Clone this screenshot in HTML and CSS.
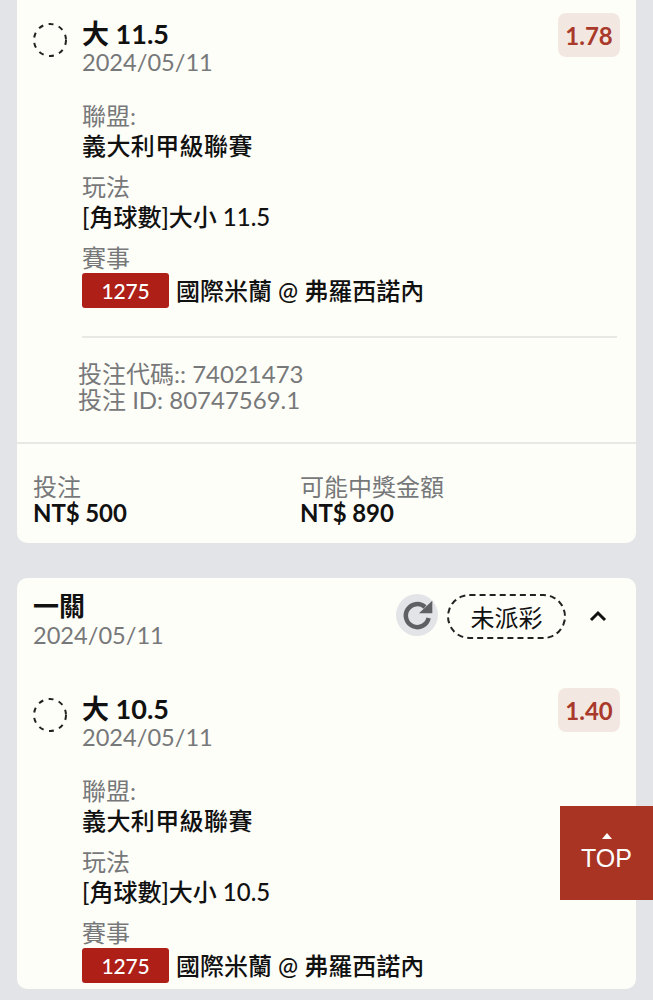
FILE: index.html
```html
<!DOCTYPE html>
<html lang="zh-Hant">
<head>
<meta charset="utf-8">
<title>投注紀錄</title>
<link rel="stylesheet" href="styles.css">
</head>
<body>
<main class="page">
  <section class="card card-first">
    <div class="bet">
      <svg class="status-dot" viewBox="0 0 34 34" width="34" height="34"><circle cx="17" cy="17" r="16" fill="none" stroke="#222" stroke-width="2" stroke-dasharray="5 5.5"/></svg>
      <div class="bet-body">
        <div class="bet-head">
          <div class="bet-summary">
            <div class="bet-title">大 11.5</div>
            <div class="date">2024/05/11</div>
          </div>
          <span class="odds">1.78</span>
        </div>
        <dl class="fields">
          <dt>聯盟:</dt><dd class="league">義大利甲級聯賽</dd>
          <dt>玩法</dt><dd>[角球數]大小 11.5</dd>
          <dt>賽事</dt>
          <dd class="match"><span class="match-id">1275</span>國際米蘭 @ 弗羅西諾內</dd>
        </dl>
      </div>
    </div>
    <div class="codes">
      <div>投注代碼:: 74021473</div>
      <div>投注 ID: 80747569.1</div>
    </div>
    <div class="totals">
      <div class="total">
        <div class="muted">投注</div>
        <div class="amount">NT$ 500</div>
      </div>
      <div class="total">
        <div class="muted">可能中獎金額</div>
        <div class="amount">NT$ 890</div>
      </div>
    </div>
  </section>

  <section class="card card-second">
    <header class="card-head">
      <div>
        <div class="card-title">一關</div>
        <div class="date">2024/05/11</div>
      </div>
      <div class="card-actions">
        <button class="refresh" aria-label="重新整理">
          <svg viewBox="0 0 42 42" width="42" height="42">
            <path d="M32.6 24A11.5 11.5 0 1 1 29 13" fill="none" stroke="#5f6063" stroke-width="4.5"/>
            <path d="M23 19.3 36.3 6.7V19.3Z" fill="#5f6063"/>
          </svg>
        </button>
        <span class="pill">未派彩</span>
        <svg class="chevron" viewBox="0 0 18 12" width="18" height="12">
          <path d="M2 10 9 3l7 7" fill="none" stroke="#111" stroke-width="3"/>
        </svg>
      </div>
    </header>
    <div class="bet">
      <svg class="status-dot" viewBox="0 0 34 34" width="34" height="34"><circle cx="17" cy="17" r="16" fill="none" stroke="#222" stroke-width="2" stroke-dasharray="5 5.5"/></svg>
      <div class="bet-body">
        <div class="bet-head">
          <div class="bet-summary">
            <div class="bet-title">大 10.5</div>
            <div class="date">2024/05/11</div>
          </div>
          <span class="odds">1.40</span>
        </div>
        <dl class="fields">
          <dt>聯盟:</dt><dd class="league">義大利甲級聯賽</dd>
          <dt>玩法</dt><dd>[角球數]大小 10.5</dd>
          <dt>賽事</dt>
          <dd class="match"><span class="match-id">1275</span>國際米蘭 @ 弗羅西諾內</dd>
        </dl>
      </div>
    </div>
  </section>
</main>
<a class="to-top" href="#"><span class="to-top-arrow"></span>TOP</a>
</body>
</html>
```
FILE: styles.css
```css
* { box-sizing: border-box; }
html, body { margin: 0; padding: 0; }
body {
  position: relative;
  height: 1000px;
  overflow: hidden;
  background: #e3e4e8;
  color: #111;
  font-family: Lato, "Noto Sans CJK TC", sans-serif;
  font-size: 24px;
  line-height: 26px;
}
.page { display: flex; flex-direction: column; gap: 35px; padding: 0 17px; }
.card { background: #fefef8; border-radius: 0 0 10px 10px; }
.card-first { height: 543px; padding-top: 13px; }
.card-second { height: 411px; border-radius: 10px; }
.muted { color: #77787a; }
.date { color: #77787a; font-size: 23.6px; line-height: 28px; }

.bet { display: flex; padding: 0 16px; }
.status-dot { flex: none; margin-top: 10px; }
.bet-body { flex: 1; margin-left: 15px; }
.bet-head { display: flex; justify-content: space-between; align-items: flex-start; }
.bet-summary { padding-top: 7px; height: 65px; }
.bet-title { font-size: 27px; line-height: 28px; font-weight: 700; }
.odds {
  width: 62px;
  height: 44px;
  border-radius: 8px;
  background: #f3e7e1;
  color: #a9392a;
  font-weight: 700;
  line-height: 46px;
  text-align: center;
}
.fields { margin: 23px 0 0; }
.fields dt { margin-top: 11px; line-height: 30px; color: #77787a; }
.fields dt:first-child { margin-top: 0; }
.fields dd { margin: 0; line-height: 30px; font-weight: 500; font-size: 24px; }
.fields dd:nth-of-type(1) { margin-bottom: 1px; }
.fields .league { letter-spacing: 0.4px; }
.fields .match { display: flex; align-items: center; height: 35px; margin-top: 0; }
.match-id {
  width: 87px;
  height: 35px;
  margin-right: 7px;
  border-radius: 3px;
  background: #ad1f17;
  color: #fff;
  font-size: 21px;
  font-weight: 500;
  letter-spacing: -0.2px;
  line-height: 36px;
  text-align: center;
}
.codes {
  margin: 28px 19px 0 65px;
  padding: 23px 0 0 0;
  border-top: 2px solid #e8e8e4;
  color: #77787a;
}
.codes > div { margin-left: -4px; }
.totals {
  display: grid;
  grid-template-columns: 267px 1fr;
  margin-top: 29px;
  padding: 30px 16px 0;
  border-top: 2px solid #e8e8e4;
}
.amount { font-weight: 700; letter-spacing: -0.1px; }
.total { line-height: 26px; }

.card-head { display: flex; justify-content: space-between; height: 110px; padding: 13px 16px 0; }
.card-title { font-size: 26px; line-height: 30px; font-weight: 700; }
.card-actions { display: flex; align-items: flex-start; padding-top: 3px; }
.refresh {
  display: flex;
  align-items: center;
  justify-content: center;
  width: 42px;
  height: 42px;
  margin-right: 9px;
  padding: 0;
  border: 0;
  border-radius: 50%;
  background: #e3e4e8;
}
.pill {
  width: 119px;
  height: 45px;
  border: 2px dashed #222;
  border-radius: 23px;
  line-height: 44px;
  text-align: center;
}
.chevron { margin: 16px 13px 0 23px; }

.to-top {
  position: absolute;
  right: 0;
  top: 806px;
  display: flex;
  flex-direction: column;
  align-items: center;
  width: 93px;
  height: 94px;
  padding-top: 27px;
  background: #a93423;
  color: #fff;
  font-family: "Liberation Sans", sans-serif;
  font-size: 25px;
  line-height: 28px;
  text-decoration: none;
}
.to-top-arrow {
  width: 0;
  height: 0;
  margin-bottom: 5px;
  border: 5px solid transparent;
  border-top: 0;
  border-bottom: 6px solid #fff;
}
```
